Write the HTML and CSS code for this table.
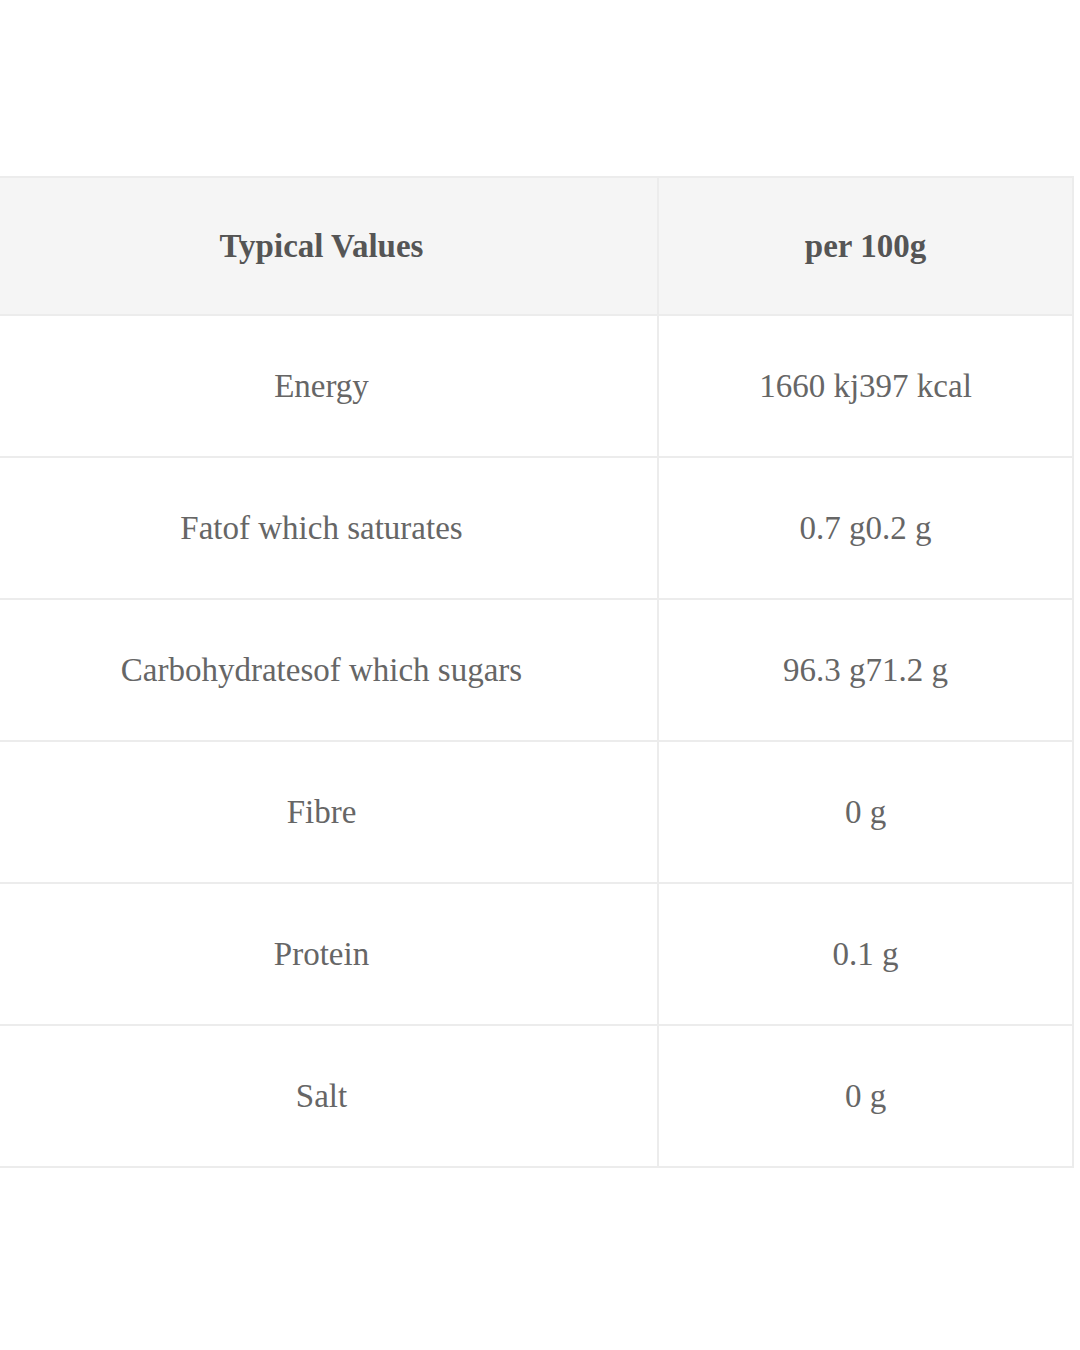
FILE: index.html
```html
<!DOCTYPE html>
<html>
<head>
<meta charset="utf-8">
<link rel="stylesheet" href="styles.css">
</head>
<body>
<div class="page">
  <table class="nutrition">
    <thead>
      <tr><th class="c1">Typical Values</th><th class="c2">per 100g</th></tr>
    </thead>
    <tbody>
      <tr><td>Energy</td><td>1660 kj397 kcal</td></tr>
      <tr><td>Fatof which saturates</td><td>0.7 g0.2 g</td></tr>
      <tr><td>Carbohydratesof which sugars</td><td>96.3 g71.2 g</td></tr>
      <tr><td>Fibre</td><td>0 g</td></tr>
      <tr><td>Protein</td><td>0.1 g</td></tr>
      <tr><td>Salt</td><td>0 g</td></tr>
    </tbody>
  </table>
</div>
</body>
</html>
```
FILE: styles.css
```css
html, body {
  margin: 0;
  padding: 0;
  background: #ffffff;
}
.page {
  padding-top: 176px;
  overflow: hidden;
  width: 1080px;
  height: 1350px;
  box-sizing: border-box;
}
.nutrition {
  margin-left: -16px;
  width: 1084px;
  border-collapse: collapse;
  table-layout: fixed;
  font-family: "Liberation Serif", "Times New Roman", serif;
  font-size: 33px;
  color: #666666;
}
.nutrition th, .nutrition td {
  border: 2px solid #ececec;
  text-align: center;
  vertical-align: middle;
  padding: 0;
}
.nutrition th {
  background: #f5f5f5;
  color: #555555;
  font-weight: bold;
  height: 136px;
}
.nutrition td {
  height: 140px;
}
.nutrition .c1 { width: 671px; }
.nutrition .c2 { width: 413px; }
```
